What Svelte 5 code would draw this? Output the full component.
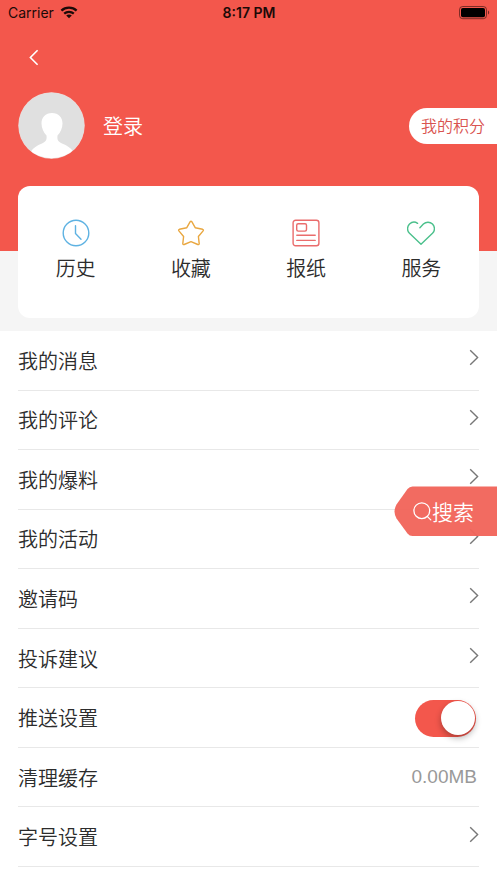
<script>
    let pushOn = $state(true);

    const shortcuts = [
        { icon: "history", label: "历史" },
        { icon: "star", label: "收藏" },
        { icon: "paper", label: "报纸" },
        { icon: "heart", label: "服务" },
    ];

    const rows = [
        { label: "我的消息" },
        { label: "我的评论" },
        { label: "我的爆料" },
        { label: "我的活动" },
        { label: "邀请码" },
        { label: "投诉建议" },
        { label: "推送设置", type: "switch" },
        { label: "清理缓存", type: "value", value: "0.00MB" },
        { label: "字号设置" },
    ];
</script>

<div class="page">
    <header>
        <div class="status">
            <div class="carrier">
                <span>Carrier</span>
                <svg width="18" height="13" viewBox="0 0 18 13" fill="none" stroke="#1c0a08" stroke-width="2.3">
                    <path d="M1.4 4.6C5.6.7 12.4.7 16.6 4.6" />
                    <path d="M4.2 7.6C6.9 5.2 11.1 5.2 13.8 7.6" />
                    <path d="M9 12.3L6.2 9.5C7.8 8.2 10.2 8.2 11.8 9.5Z" fill="#1c0a08" stroke="none" />
                </svg>
            </div>
            <div class="time">8:17 PM</div>
            <div class="battery">
                <svg width="31" height="14" viewBox="0 0 31 14">
                    <rect x="0.5" y="0.5" width="27" height="12.2" rx="3.2" fill="none" stroke="#1c0a08" stroke-opacity="0.55" />
                    <rect x="2" y="2" width="24" height="9.2" rx="1.8" fill="#000" />
                    <path d="M29 4.6C30.6 5.2 30.6 8 29 8.6Z" fill="#1c0a08" fill-opacity="0.6" />
                </svg>
            </div>
        </div>

        <button class="back" aria-label="返回">
            <svg width="10" height="17" viewBox="0 0 10 17" fill="none" stroke="#fff" stroke-width="1.6">
                <path d="M8.6 1.2L1.4 8.5L8.6 15.8" />
            </svg>
        </button>

        <div class="user">
            <svg class="avatar" width="67" height="67" viewBox="0 0 67 67">
                <defs>
                    <clipPath id="round"><circle cx="33.5" cy="33.5" r="32.8" /></clipPath>
                </defs>
                <circle cx="33.5" cy="33.5" r="33.2" fill="#f3d3d0" />
                <g clip-path="url(#round)">
                    <rect width="67" height="67" fill="#e0e0e0" />
                    <path d="M34 21C27.5 21 23.5 25.5 23.5 31.5C23.5 36 25.5 40.5 28.5 43.5C29 48 28 49.5 24 51.5C19 53.5 15 56 13 59.5V67H55V59.5C53 56 49 53.5 44 51.5C40 49.5 39 48 39.5 43.5C42.5 40.5 44.5 36 44.5 31.5C44.5 25.5 40.5 21 34 21Z" fill="#fff" />
                </g>
            </svg>
            <span class="login">登录</span>
            <button class="points">我的积分</button>
        </div>
    </header>

    <section class="top">
        <div class="card">
            {#each shortcuts as item (item.icon)}
                <div class="shortcut">
                    <svg width="28" height="28" viewBox="0 0 28 28" fill="none" stroke-width="1.4" stroke-linejoin="round" stroke-linecap="round">
                        {#if item.icon == "history"}
                            <g stroke="#5eb2e2">
                                <circle cx="14" cy="14" r="12.8" />
                                <path d="M13.5 6.8V14.5L19 20.2" />
                            </g>
                        {:else if item.icon == "star"}
                            <path stroke="#e9a740" d="M13.2 2.7Q14 1.7 14.8 2.7L18.2 8.7L25.6 10.3Q26.9 10.8 26.1 11.9L21.4 17.5L22.2 24.6Q22.1 25.9 20.8 25.5L14 22.7L7.2 25.5Q5.9 25.9 5.8 24.6L6.6 17.5L1.9 11.9Q1.1 10.8 2.4 10.3L9.8 8.7Z" />
                        {:else if item.icon == "paper"}
                            <g stroke="#ea6c6c">
                                <rect x="1.1" y="1.2" width="25.8" height="25.6" rx="2.5" />
                                <rect x="4.7" y="4.7" width="9.8" height="7.4" rx="1.5" />
                                <path d="M4.8 16.3H23.2M4.8 21.4H23.2" />
                            </g>
                        {:else}
                            <path stroke="#4bc08c" d="M10.6 4.3C8 2.5 4.7 2.9 2.5 5.1C-.1 7.8-.1 11.7 2.5 14.3L14 25.3L25.5 14.3C28.1 11.7 28.1 7.8 25.5 5.1C22.9 2.5 19 2.6 16.4 5.1L12.9 8.8" />
                        {/if}
                    </svg>
                    <span>{item.label}</span>
                </div>
            {/each}
        </div>
    </section>

    <ul class="list">
        {#each rows as row (row.label)}
            <li>
                <span>{row.label}</span>
                {#if row.type == "switch"}
                    <button class="switch" class:on={pushOn} aria-label={row.label} onclick={() => pushOn = !pushOn}>
                        <i></i>
                    </button>
                {:else if row.type == "value"}
                    <span class="value">{row.value}</span>
                {:else}
                    <svg class="arrow" width="10" height="17" viewBox="0 0 10 17" fill="none" stroke="#777" stroke-width="1.4">
                        <path d="M1.2 1.3L8.6 8.5L1.2 15.7" />
                    </svg>
                {/if}
            </li>
        {/each}
    </ul>

    <button class="search">
        <svg class="shape" width="103" height="51" viewBox="0 0 103 51">
            <path d="M103 .5H18.5Q15.5.5 13.5 3L2.5 18.5Q-1.5 25.5 2.5 32.5L13.5 47.5Q15.5 50 18.5 50H103Z" fill="#f2655b" />
        </svg>
        <span class="inner">
            <svg width="19" height="19" viewBox="0 0 19 19" fill="none" stroke="#fff" stroke-width="1.3">
                <circle cx="8.8" cy="8.7" r="7.9" />
                <path d="M14.2 14.4L17.8 17.9" stroke-linecap="round" />
            </svg>
            <span>搜索</span>
        </span>
    </button>
</div>

<style>
    :global(body){
        margin: 0;
        background-color: white;
    }

    .page{
        position: relative;
        width: 100%;
        height: 883px;
        overflow: hidden;
        background-color: white;
        color: #2c2c2c;
        font-family: "Inter", "Noto Sans CJK SC", sans-serif;
        font-weight: 350;
    }

    button{
        border: none;
        padding: 0;
        background: none;
        font-family: inherit;
        font-weight: inherit;
        cursor: pointer;
    }

    svg{
        display: block;
        flex-shrink: 0;
    }

    header{
        height: 251px;
        background-color: #f3574c;
    }

    .status{
        display: flex;
        box-sizing: border-box;
        align-items: center;
        height: 26px;
        padding: 0 7px 1px 8px;
        color: #1c0a08;
        font-size: 14px;
        font-weight: 400;
    }

    .status > div{
        flex: 1;
    }

    .carrier{
        display: flex;
        align-items: center;
        gap: 6px;
    }

    .time{
        text-align: center;
        font-weight: 600;
    }

    .battery{
        display: flex;
        justify-content: flex-end;
    }

    .back{
        display: block;
        margin: 23px 0 0 29px;
    }

    .user{
        display: flex;
        align-items: center;
        height: 67px;
        margin-top: 26px;
        padding-left: 18px;
    }

    .login{
        margin-left: 18px;
        color: white;
        font-size: 20px;
    }

    .points{
        width: 88px;
        height: 36px;
        margin-left: auto;
        padding: 0 0 1px 12px;
        border-radius: 18px 0 0 18px;
        background-color: white;
        color: #d9534f;
        font-size: 16px;
        text-align: left;
    }

    .top{
        display: flex;
        height: 80px;
        padding: 0 18px;
        background-color: #f5f5f5;
    }

    .card{
        display: flex;
        flex: 1;
        height: 132px;
        margin-top: -65px;
        border-radius: 12px;
        background-color: white;
    }

    .shortcut{
        display: flex;
        flex: 1;
        flex-direction: column;
        align-items: center;
        padding-top: 33px;
        font-size: 20px;
        line-height: 30px;
    }

    .shortcut span{
        margin-top: 7px;
    }

    .list{
        margin: 0;
        padding: 0 18px;
        list-style: none;
    }

    li{
        display: flex;
        box-sizing: border-box;
        align-items: center;
        justify-content: space-between;
        height: 59.55px;
        border-bottom: 1px solid #e8e8e8;
        font-size: 20px;
    }

    .arrow{
        margin: 0 0 5px 0;
    }

    .value{
        margin-right: 2px;
        color: #999;
        font-family: "Liberation Sans", sans-serif;
        font-size: 19px;
    }

    .switch{
        width: 61px;
        height: 37px;
        margin: 1px 3px 0 0;
        padding: 1px;
        border-radius: 19px;
        background-color: #ccc;
    }

    .switch i{
        display: block;
        width: 34px;
        height: 34px;
        border-radius: 50%;
        background-color: white;
        box-shadow: 0 3px 6px rgba(0,0,0,0.3);
    }

    .on{
        background-color: #f3574c;
    }

    .on i{
        margin-left: auto;
    }

    .search{
        position: absolute;
        top: 486px;
        right: 0;
        display: grid;
        opacity: 0.96;
    }

    .search > *{
        grid-area: 1 / 1;
    }

    .inner{
        display: flex;
        align-items: center;
        padding: 0 0 2px 19px;
        color: white;
        font-size: 21px;
    }

    .inner svg{
        margin-top: 2px;
    }
</style>
